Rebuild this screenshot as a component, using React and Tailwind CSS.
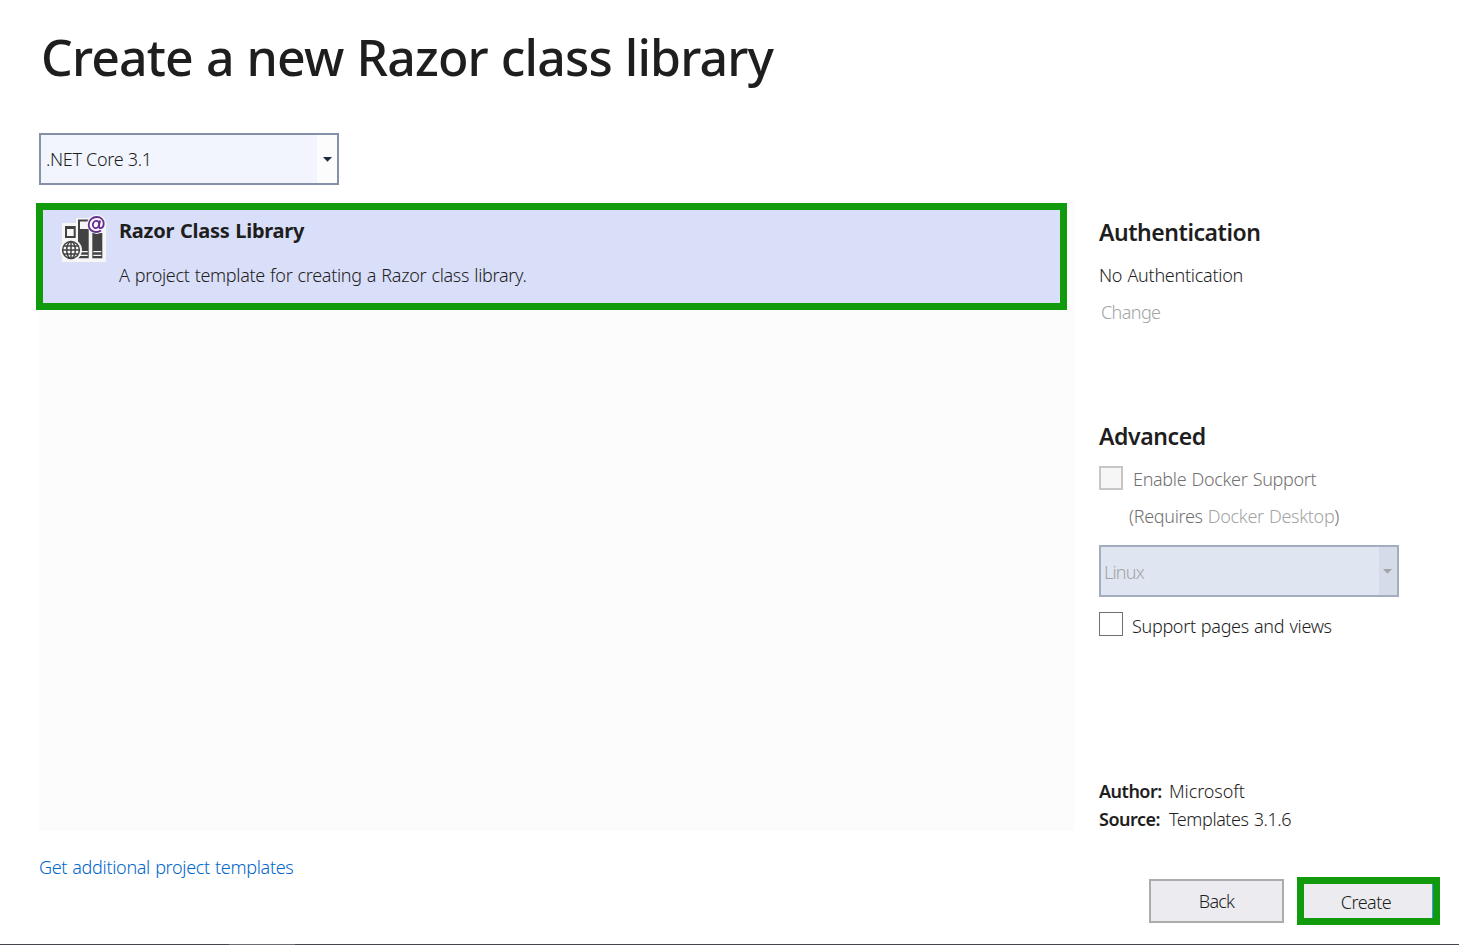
function ProjectIcon() {
  return (
    <svg width="48" height="48" viewBox="0 0 48 48" className="shrink-0">
      <path d="M2 8h14V3h14v6h16v38H2z" fill="#f6f6f6" />
      <path fillRule="evenodd" d="M5 11h10.700v12H5zm2 3v7h6.700v-7z" fill="#424242" />
      <path d="M18 4.500h10.700v2H20V14h8.700v29.300H18z" fill="#424242" />
      <path d="M32.300 18h10v25.300h-10z" fill="#424242" />
      <path d="M19 36.700h8.700M19 40.300h8.700M33.300 36.700h8M33.300 40.300h8" stroke="#f6f6f6" strokeWidth="1.200" />
      <circle cx="11" cy="35" r="11" fill="#f6f6f6" />
      <g fill="none" stroke="#424242" strokeWidth="1.500">
        <circle cx="11" cy="35" r="8.400" />
        <ellipse cx="11" cy="35" rx="4.300" ry="8.400" />
        <path d="M11 26.500v17M2.500 35h17M4 31h14M4 39h14" />
      </g>
      <circle cx="36.700" cy="9.300" r="9.600" fill="#f6f6f6" />
      <g fill="none" stroke="#652d90" strokeWidth="1.800">
        <path d="M41 15.500c-5 3.300-12.300.8-12.300-5.700 0-4.800 3.700-7.800 8-7.800 4.200 0 7 2.600 7 6.500 0 5.300-5.600 6.500-4.600 1.500l1-4.500" />
        <ellipse cx="36" cy="9.500" rx="3.100" ry="3.700" transform="rotate(15 36 9.500)" />
      </g>
    </svg>
  );
}

function Arrow({ className }) {
  return (
    <svg width="9" height="5" viewBox="0 0 9 5" className={className}>
      <path d="M0 0h9L4.500 4.800z" fill="currentColor" />
    </svg>
  );
}

export default function App() {
  return (
    <div className="flex h-[945px] w-[1459px] flex-col overflow-hidden bg-white font-['Noto_Sans','Open_Sans',sans-serif] text-[18px] leading-6 font-[350] tracking-[-0.32px] whitespace-nowrap text-[#1e1e1e] [word-spacing:0.8px]">
      <h1 className="h-[133px] pt-[25px] pl-[41px] text-[50px] leading-[64px] font-medium tracking-[-0.85px]">
        Create a new Razor class library
      </h1>

      <div className="flex h-[744px]">
        <main className="flex w-[1075px] flex-col pl-[39px]">
          <button className="flex h-[52px] w-[300px] border-2 border-[#8591a8] bg-[#f2f5fd] text-left">
            <span className="flex-1 pt-3 pl-[5px]">.NET Core 3.1</span>
            <span className="flex h-full w-5 items-center justify-center bg-[#fcfcfc] pt-px">
              <Arrow className="text-[#1b293e]" />
            </span>
          </button>

          <section className="mt-[15px] h-[631px] shrink-0 bg-[#fcfcfc] pt-[3px]">
            <div className="-ml-[3px] flex h-[107px] w-[1031px] border-[7px] border-[#109a0c] bg-[#dadff9] pl-[17px]">
              <div className="w-[59px] pt-[5px]">
                <ProjectIcon />
              </div>
              <div className="pt-[9px]">
                <h2 className="text-[20px] font-bold tracking-[-0.25px]">Razor Class Library</h2>
                <p className="mt-5">A project template for creating a Razor class library.</p>
              </div>
            </div>
          </section>

          <a className="mt-[26px] leading-5 text-[#0066cc]">Get additional project templates</a>
        </main>

        <aside className="flex flex-col pl-6">
          <h3 className="mt-[83px] h-8 text-[23px] leading-8 font-semibold tracking-[-0.45px]">Authentication</h3>
          <p className="mt-[15px] tracking-[-0.27px]">No Authentication</p>
          <span className="mt-[13px] pl-[2px] tracking-[-0.6px] text-[#a2a4a5]">Change</span>

          <h3 className="mt-24 h-8 text-[23px] leading-8 font-semibold tracking-[-0.4px]">Advanced</h3>
          <label className="mt-[14px] flex h-6 items-center text-[#717171]">
            <span className="size-6 border-2 border-[#c6c6c6] bg-[#f6f6f6]" />
            <span className="pt-px pl-[10px]">Enable Docker Support</span>
          </label>
          <p className="mt-[14px] pl-[30px] text-[#717171]">
            (Requires <span className="text-[#a2a4a5]">Docker Desktop</span>)
          </p>
          <div className="mt-[17px] flex h-[52px] w-[300px] border-2 border-[#a2aebd] bg-[#dfe6f2] text-[#a2a4a5]">
            <span className="flex-1 pt-[13px] pl-[3px] tracking-[-0.8px]">Linux</span>
            <span className="flex w-[18px] items-center justify-center bg-[#d5dbe8] pr-px">
              <Arrow />
            </span>
          </div>
          <label className="mt-[15px] flex h-6 items-center">
            <span className="size-6 border border-[#717171] bg-white" />
            <span className="pt-[3px] pl-[9px]">Support pages and views</span>
          </label>

          <dl className="mt-[143px] grid grid-cols-[70px_1fr] gap-y-1">
            <dt className="font-semibold tracking-[-0.5px]">Author:</dt>
            <dd className="tracking-[-0.1px]">Microsoft</dd>
            <dt className="font-semibold tracking-[-0.5px]">Source:</dt>
            <dd className="tracking-[-0.43px]">Templates 3.1.6</dd>
          </dl>
        </aside>
      </div>

      <footer className="flex h-[67px] gap-[13px] pl-[1149px]">
        <button className="mt-[2px] h-11 w-[135px] border-2 border-[#acacac] bg-[#ececf0] tracking-[-0.8px]">Back</button>
        <div className="h-12 w-[143px] border-[7px] border-[#109a0c]">
          <button className="h-full w-full border-r border-[#3399ff] bg-[#ececf0] pt-[2px] pr-[4px] tracking-[-0.5px]">Create</button>
        </div>
      </footer>
      <div className="flex h-px bg-[#42474e]">
        <span className="ml-[229px] w-[66px] bg-[#696e74]" />
      </div>
    </div>
  );
}
